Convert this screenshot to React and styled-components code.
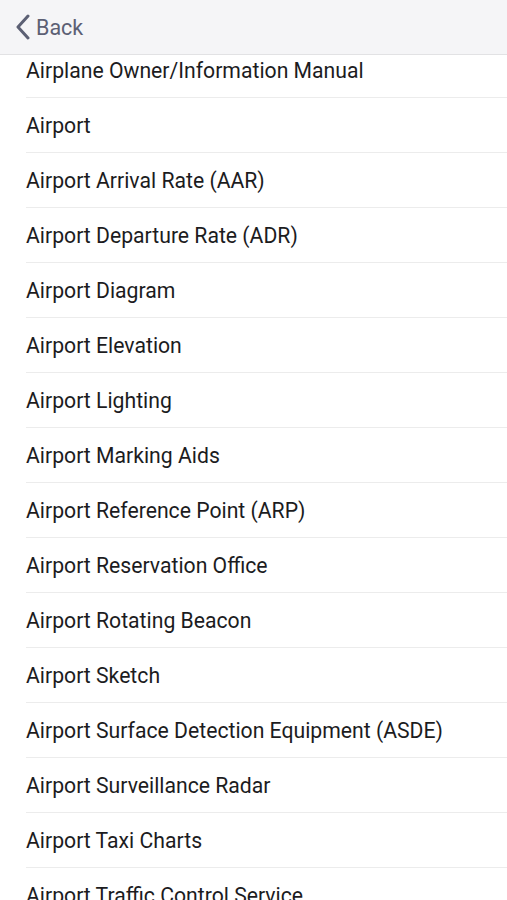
import React from 'react'
import styled, { createGlobalStyle } from 'styled-components'

const GlobalStyle = createGlobalStyle`
  html, body {
    margin: 0;
    padding: 0;
    background: #fff;
    font-family: Roboto, "Liberation Sans", Arial, sans-serif;
  }
`

const Screen = styled.div`
  width: 507px;
  height: 900px;
  overflow: hidden;
  display: flex;
  flex-direction: column;
  background: #fff;
`

const NavBar = styled.div`
  height: 55px;
  flex: none;
  display: flex;
  align-items: center;
  padding-left: 15px;
  background: #f5f5f7;
  border-bottom: 1px solid #e2e2e4;
  box-sizing: border-box;
  position: relative;
  z-index: 1;
`

const BackButton = styled.button`
  display: flex;
  align-items: center;
  gap: 6px;
  background: none;
  border: 0;
  padding: 0;
  color: #5c6074;
  font-family: inherit;
  font-size: 21.5px;
  cursor: pointer;
`

const List = styled.ul`
  list-style: none;
  margin: -12px 0 0;
  padding: 0 0 0 26px;
`

const Row = styled.li`
  height: 55px;
  display: flex;
  align-items: center;
  border-bottom: 1px solid #ececec;
  box-sizing: border-box;
  font-size: 21.2px;
  color: #1c1c1e;
  white-space: nowrap;
`

const items = [
  'Airplane Owner/Information Manual',
  'Airport',
  'Airport Arrival Rate (AAR)',
  'Airport Departure Rate (ADR)',
  'Airport Diagram',
  'Airport Elevation',
  'Airport Lighting',
  'Airport Marking Aids',
  'Airport Reference Point (ARP)',
  'Airport Reservation Office',
  'Airport Rotating Beacon',
  'Airport Sketch',
  'Airport Surface Detection Equipment (ASDE)',
  'Airport Surveillance Radar',
  'Airport Taxi Charts',
  'Airport Traffic Control Service',
]

const Chevron = () => (
  <svg width="15" height="26" viewBox="0 0 15 26" fill="none">
    <path d="M13 2 L3 13 L13 24" stroke="#5c6074" strokeWidth="3" strokeLinecap="round" strokeLinejoin="round" />
  </svg>
)

export default function App() {
  return (
    <Screen>
      <GlobalStyle />
      <NavBar>
        <BackButton>
          <Chevron />
          Back
        </BackButton>
      </NavBar>
      <List>
        {items.map((t) => (
          <Row key={t}>{t}</Row>
        ))}
      </List>
    </Screen>
  )
}
